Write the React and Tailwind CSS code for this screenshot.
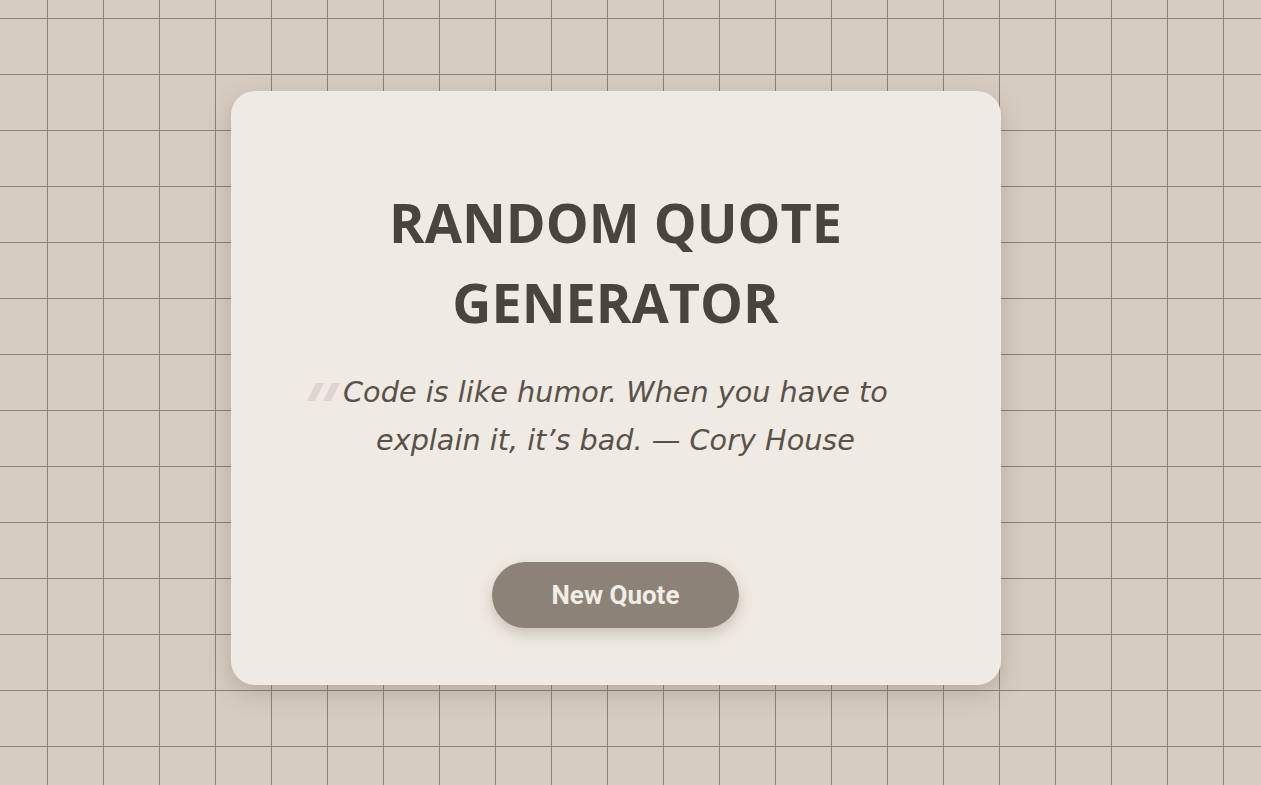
export default function App() {
  return (
    <div className="min-h-screen w-full bg-[#d7ccc2] bg-[linear-gradient(to_right,#8b8178_1px,transparent_1px),linear-gradient(to_bottom,#8b8178_1px,transparent_1px)] bg-[size:56px_56px] bg-[position:47px_18px] flex justify-center pt-[91px] pr-[30px]">
      <div className="relative w-[770px] h-[594px] bg-[#efeae3] rounded-[24px] shadow-[0_8px_24px_rgba(90,75,60,0.25)] flex flex-col items-center pt-[91px]">
        <h1 className="text-[#4a443e] text-[54px] leading-[80px] font-bold tracking-[0px] text-center font-['Open_Sans',sans-serif] w-[600px]">
          RANDOM QUOTE GENERATOR
        </h1>
        {/* opening quote mark */}
        <svg
          className="absolute left-[76px] top-[292px]"
          width="34"
          height="18"
          viewBox="0 0 34 18"
        >
          <polygon points="9,0 17,0 8,18 0,18" fill="#dcd6ce" />
          <polygon points="25,0 33,0 24,18 16,18" fill="#dcd6ce" />
        </svg>
        <p className="mt-[26px] w-[600px] text-[#5a5149] text-[28.7px] leading-[48px] italic text-center font-['DejaVu_Sans',sans-serif] px-[10px]">
          Code is like humor. When you have to explain it, it’s bad. — Cory House
        </p>
        <button className="mt-[98px] w-[247px] h-[66px] rounded-full bg-[#8c8277] text-[#f2ede6] text-[26px] font-bold font-['Roboto',sans-serif] shadow-[0_6px_14px_rgba(90,75,60,0.25)]">
          New Quote
        </button>
      </div>
    </div>
  );
}
